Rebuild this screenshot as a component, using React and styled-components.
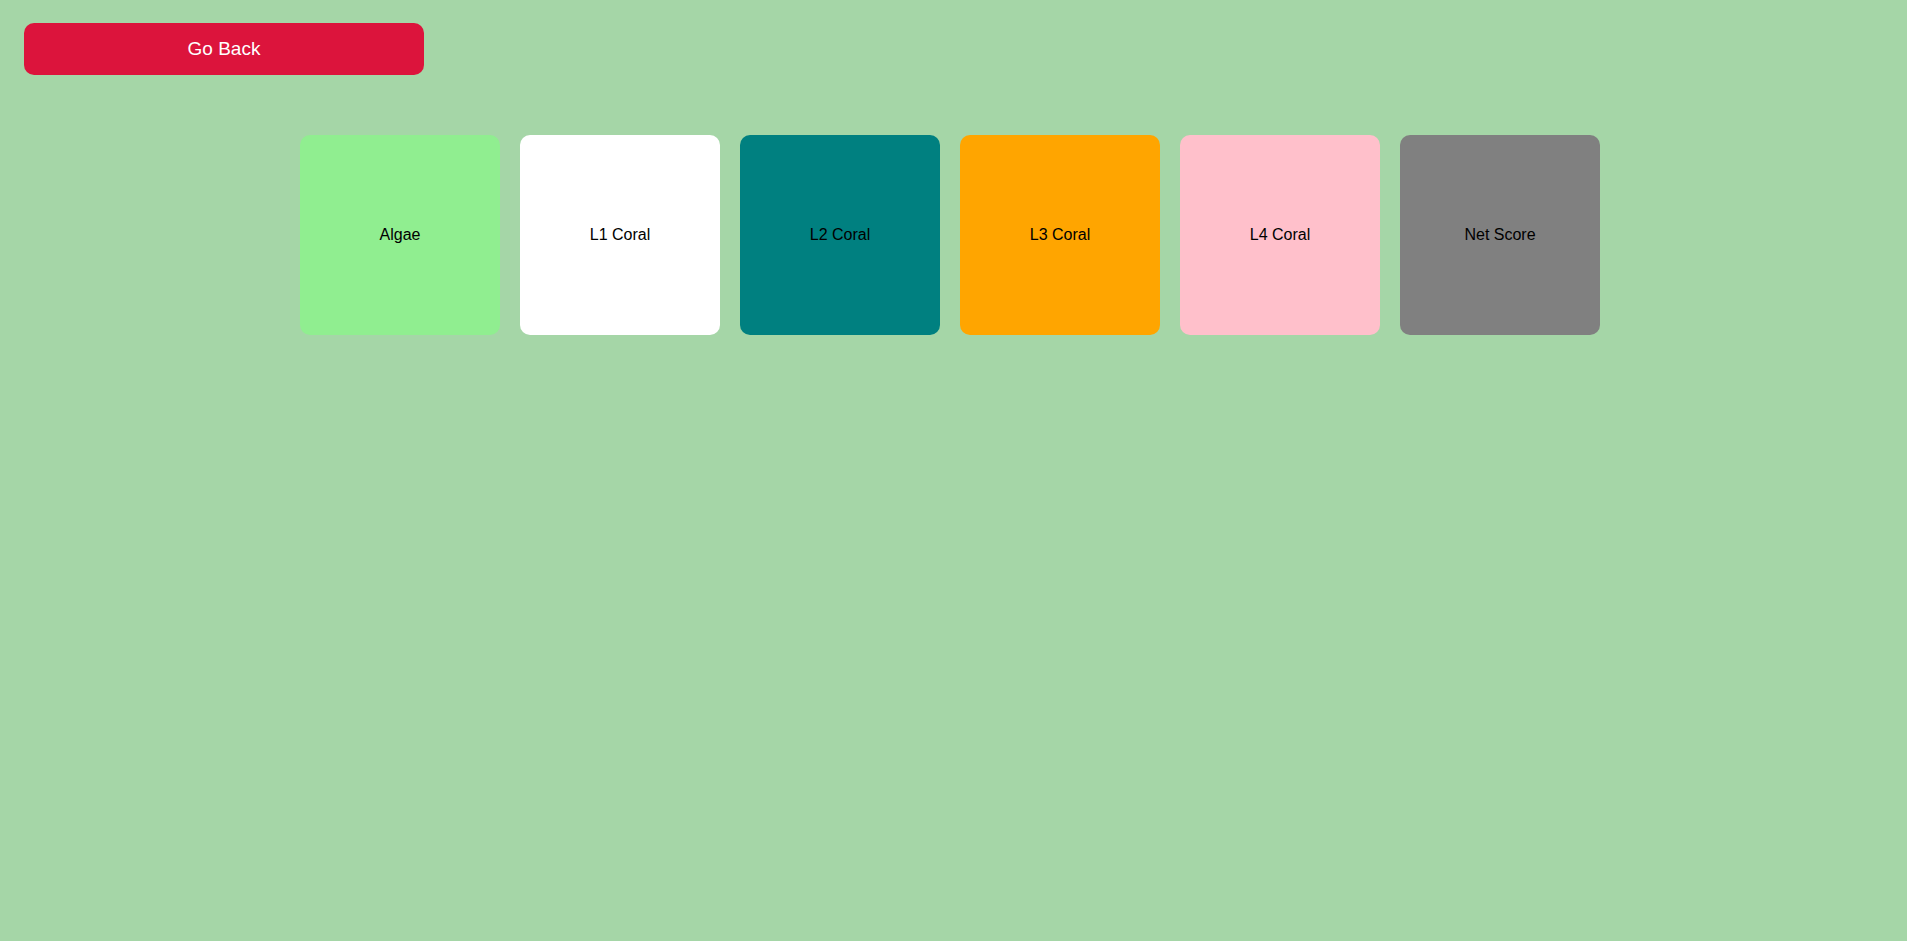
import React from "react";
import styled, { createGlobalStyle } from "styled-components";

const Global = createGlobalStyle`
  html, body {
    margin: 0;
    padding: 0;
    background: #a5d6a7;
    font-family: "Liberation Sans", Arial, sans-serif;
  }
  body { min-height: 941px; }
`;

const Page = styled.div`
  min-height: 941px;
  background: #a5d6a7;
  display: flex;
  flex-direction: column;
  padding: 23px 0 0 24px;
  box-sizing: border-box;
`;

const BackButton = styled.button`
  width: 400px;
  height: 52px;
  border: none;
  border-radius: 10px;
  background: #dc143c;
  color: #ffffff;
  font-family: "Liberation Sans", Arial, sans-serif;
  font-size: 19px;
  cursor: pointer;
  padding: 0;
`;

const CardRow = styled.div`
  display: flex;
  justify-content: center;
  gap: 20px;
  margin-top: 60px;
  margin-left: -24px;
  padding-right: 7px;
`;

const Card = styled.div`
  width: 200px;
  height: 200px;
  border-radius: 10px;
  background: ${(p) => p.$bg};
  display: flex;
  align-items: center;
  justify-content: center;
  color: #000;
  font-size: 16px;
`;

const cards = [
  { label: "Algae", bg: "#90ee90" },
  { label: "L1 Coral", bg: "#ffffff" },
  { label: "L2 Coral", bg: "#008080" },
  { label: "L3 Coral", bg: "#ffa500" },
  { label: "L4 Coral", bg: "#ffc0cb" },
  { label: "Net Score", bg: "#808080" },
];

export default function App() {
  return (
    <>
      <Global />
      <Page>
        <div>
          <BackButton>Go Back</BackButton>
        </div>
        <CardRow>
          {cards.map((c) => (
            <Card key={c.label} $bg={c.bg}>
              {c.label}
            </Card>
          ))}
        </CardRow>
      </Page>
    </>
  );
}
